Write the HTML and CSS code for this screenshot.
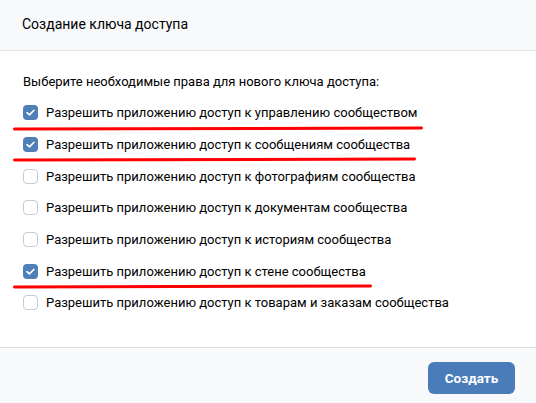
FILE: index.html
```html
<!DOCTYPE html>
<html lang="ru">
<head>
    <meta charset="UTF-8">
    <meta name="viewport" content="width=device-width, initial-scale=1.0">
    <title>Создание ключа доступа</title>
    <link rel="stylesheet" href="styles.css">
</head>
<body>

    <div class="box">
        <!-- Header -->
        <div class="box-header">Создание ключа доступа</div>

        <!-- Body -->
        <div class="box-body">
            <p class="box-hint">Выберите необходимые права для нового ключа доступа:</p>

            <div class="rights">
                <label class="right marked">
                    <span class="check on"></span>
                    Разрешить приложению доступ к управлению сообществом
                </label>
                <label class="right marked">
                    <span class="check on"></span>
                    Разрешить приложению доступ к сообщениям сообщества
                </label>
                <label class="right">
                    <span class="check"></span>
                    Разрешить приложению доступ к фотографиям сообщества
                </label>
                <label class="right">
                    <span class="check"></span>
                    Разрешить приложению доступ к документам сообщества
                </label>
                <label class="right">
                    <span class="check"></span>
                    Разрешить приложению доступ к историям сообщества
                </label>
                <label class="right marked">
                    <span class="check on"></span>
                    Разрешить приложению доступ к стене сообщества
                </label>
                <label class="right">
                    <span class="check"></span>
                    Разрешить приложению доступ к товарам и заказам сообщества
                </label>
            </div>
        </div>

        <!-- Footer -->
        <div class="box-footer">
            <button class="button">Создать</button>
        </div>
    </div>

</body>
</html>
```

FILE: styles.css
```css
/* page */
body {
    margin: 0;
    font-family: Roboto, 'Open Sans', Arial, sans-serif;
    color: #000;
    background: #fff;
}

.box {
    width: 536px;
    height: 403px;
    display: flex;
    flex-direction: column;
}

/* header */
.box-header {
    height: 51px;
    box-sizing: border-box;
    padding: 15px 22px 0;
    font-size: 14px;
    line-height: 18px;
    background-color: #f8f9fb;
    border-bottom: 1px solid #e2e4e8;
}

/* body */
.box-body {
    flex: 1;
    padding: 23px 22px 0;
}

.box-hint {
    margin: 0 0 7px 1px;
    font-size: 13px;
    line-height: 16px;
}

.rights {
    display: flex;
    flex-direction: column;
}

.right {
    position: relative;
    align-self: flex-start;
    display: inline-flex;
    align-items: center;
    gap: 8px;
    height: 31.7px;
    padding-left: 1px;
    font-size: 13px;
    cursor: pointer;
}

/* red marker lines */
.right.marked::after {
    content: '';
    position: absolute;
    left: -9px;
    right: -6px;
    bottom: -1px;
    height: 3px;
    border-radius: 2px;
    background-color: #ff0000;
    transform: rotate(-0.15deg);
}

/* checkbox */
.check {
    width: 15px;
    height: 15px;
    box-sizing: border-box;
    border: 1px solid #c1ccd8;
    border-radius: 4px;
    background: #fff;
    flex-shrink: 0;
}

.check.on {
    border: none;
    background: #4f7fb7 url("data:image/svg+xml,%3Csvg xmlns='http://www.w3.org/2000/svg' width='15' height='15'%3E%3Cpath d='M4 7.6l2.4 2.3L11 5.3' fill='none' stroke='%23fff' stroke-width='1.6' stroke-linecap='round' stroke-linejoin='round'/%3E%3C/svg%3E") no-repeat center;
}

/* footer */
.box-footer {
    height: 56px;
    box-sizing: border-box;
    display: flex;
    justify-content: flex-end;
    align-items: flex-start;
    padding: 14px 21px 0;
    background-color: #f8f9fb;
    border-top: 1px solid #dcdee2;
}

.button {
    width: 87px;
    height: 32px;
    border: none;
    border-radius: 6px;
    background-color: #4a7cb9;
    color: #fff;
    font-family: Roboto, Arial, sans-serif;
    font-size: 13.5px;
    font-weight: bold;
    cursor: pointer;
}
```
